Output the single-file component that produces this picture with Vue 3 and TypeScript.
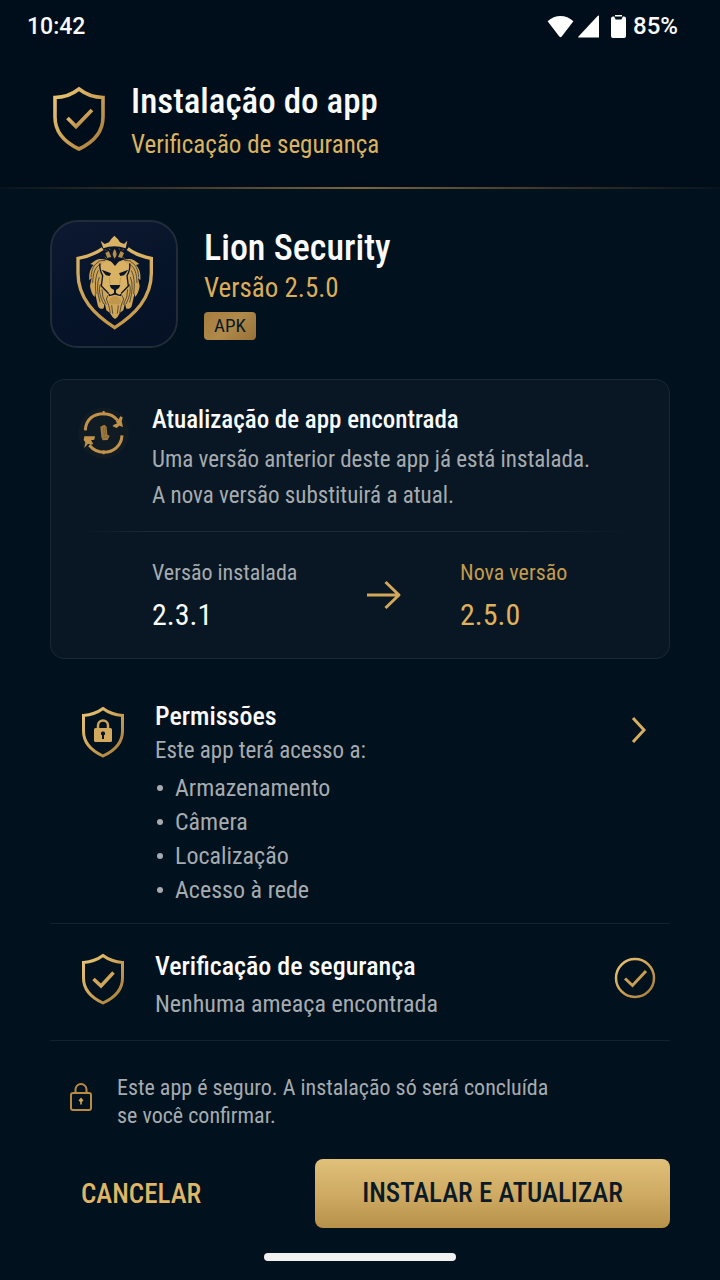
<script setup lang="ts">
interface AppRelease {
  name: string
  installed: string
  next: string
  format: string
}

const release: AppRelease = {
  name: 'Lion Security',
  installed: '2.3.1',
  next: '2.5.0',
  format: 'APK',
}

const permissions: string[] = ['Armazenamento', 'Câmera', 'Localização', 'Acesso à rede']
</script>

<template>
  <div class="screen">
    <svg class="defs" width="0" height="0" aria-hidden="true">
      <defs>
        <linearGradient id="gold" x1="0" y1="0" x2="1" y2="1">
          <stop offset="0" stop-color="#e9c675" />
          <stop offset="0.5" stop-color="#cfa356" />
          <stop offset="1" stop-color="#a27a38" />
        </linearGradient>
        <linearGradient id="goldSoft" x1="0" y1="0" x2="0" y2="1">
          <stop offset="0" stop-color="#dcb565" />
          <stop offset="1" stop-color="#c3974b" />
        </linearGradient>
      </defs>
    </svg>

    <div class="status">
      <span class="clock">10:42</span>
      <div class="indicators">
        <svg class="wifi" viewBox="0 0 27 23" aria-hidden="true">
          <path d="M.6 6.2C8-.9 19-.9 26.4 6.2L14.700 21.400Q13.500 22.900 12.300 21.400Z" fill="#fff" />
        </svg>
        <svg class="signal" viewBox="0 0 22 23" aria-hidden="true">
          <path d="M21 .8V22.500H.6Q-.3 22.500.5 21.500L19.600 1Q20.600 0 21 .8Z" fill="#fff" />
        </svg>
        <svg class="battery" viewBox="0 0 15 23" aria-hidden="true">
          <path d="M4 0h7v1.500H4z" fill="#fff" />
          <path d="M2 1.600h1.200L4.600 4.600h5.800l1.400-3H13q2 0 2 2V21q0 2-2 2H2q-2 0-2-2V3.600q0-2 2-2Z" fill="#fff" />
        </svg>
        <span>85%</span>
      </div>
    </div>

    <header class="header">
      <svg class="header-shield" viewBox="0 0 54 66" aria-hidden="true">
        <path d="M27 3C20 8.500 11 11.500 3 11.500V31C3 46 13 56.500 27 63C41 56.500 51 46 51 31V11.500C43 11.500 34 8.500 27 3Z" fill="none" stroke="url(#gold)" stroke-width="3.600" />
        <path d="M15.500 32L24 40.500L40 24" fill="none" stroke="url(#gold)" stroke-width="3.800" />
      </svg>
      <div>
        <h1 class="title">Instalação do app</h1>
        <p class="subtitle">Verificação de segurança</p>
      </div>
    </header>

    <main class="content">
      <section class="app">
        <svg class="app-icon" viewBox="-24 -24 372 372" role="img" aria-label="Lion Security">
          <g fill="none" stroke="url(#goldSoft)" stroke-width="10">
            <path d="M128 56Q98 77 54 85V130C54 205 104 254 164 293C224 254 274 205 274 130V85Q230 77 203 56" />
          </g>
          <path d="M122 32L134 42L147 37L153 28L163 17L174 28L180 37L192 42L202 32L197 55Q163 43 130 55Z" fill="#d9b263" />
          <g fill="#b38c48">
            <path d="M164 57Q176 72 164 86Q152 72 164 57Z" />
            <path d="M146 63L154 81L142 84L136 69Z" />
            <path d="M182 63L174 81L186 84L192 69Z" />
          </g>
          <path d="M135 58l4 5M147 55l3 5M177 55l3 5M191 57l-4 5M134 81l7 5M187 81l7 5" stroke="#6c5632" stroke-width="3" />
          <g fill="#cfa557">
            <path d="M150 94C139 88 119 84 107 91L91 102L101 105C91 115 86 129 88 151L95 143L90 168C92 182 96 194 104 201L105 189L114 229C119 237 125 238 131 235L134 219L139 241L149 248L158 262L165 267V100Z" />
            <path d="M180 94C191 88 211 84 222 91L238 102L228 105C238 115 243 129 241 151L234 143L239 168C237 182 233 194 225 201L224 189L215 229C210 237 204 238 198 235L195 219L190 241L180 248L172 262L165 267V100Z" />
          </g>
          <path d="M154 95L165 107L175 95L187 94C205 98 212 113 207 129L201 144L202 166L193 188L184 203L165 195L146 203L137 188L127 166L129 144L122 129C117 113 124 98 142 94Z" fill="#d9b264" />
          <g fill="none" stroke="#1a2029" stroke-width="2" stroke-linejoin="round">
            <path d="M117 95C101 104 95 117 93 142M120 103C105 112 99 128 98 159M115 121Q102 146 108 192M118 141Q106 169 120 217M121 162Q112 185 131 222M126 178Q125 201 139 224M116 93L136 91" />
            <path d="M212 95C228 104 234 117 236 142M209 103C224 112 230 128 231 159M214 121Q227 146 221 192M211 141Q223 169 209 217M208 162Q217 185 198 222M203 178Q204 201 190 224M213 93L193 91" />
            <path d="M145 195L139 207L146 225L151 249M185 195L191 207L184 225L179 249M155 226L158 251M175 226L172 251" />
          </g>
          <path d="M120 100C117 117 122 126 128 137L124 168L145 190M209 100C212 117 207 126 201 137L205 168L184 190" fill="none" stroke="#0a1527" stroke-width="4" />
          <g fill="#07142a">
            <path d="M125 119L153 130L149 138L138 136L132 129Z" />
            <path d="M205 119L177 130L181 138L192 136L198 129Z" />
            <path d="M149 165H181L177 174L168 180V189L178 194L187 188L182 199L165 194L148 199L143 188L152 194L162 189V180L153 174Z" />
            <path d="M153 94L165 108L177 94Q164 87 153 94Z" />
          </g>
          <path d="M148 142L151 163M182 142L179 163" fill="none" stroke="#c39a50" stroke-width="3" />
          <path d="M150 206Q165 192 180 206L184 216L177 223H153L146 216Z" fill="#c0964d" />
        </svg>
        <div>
          <h2 class="app-name">{{ release.name }}</h2>
          <p class="app-version">Versão {{ release.next }}</p>
          <span class="badge">{{ release.format }}</span>
        </div>
      </section>

      <section class="card">
        <div class="card-top">
          <svg class="update" viewBox="0 0 210 195" aria-hidden="true">
            <circle cx="101" cy="99" r="76" fill="#101b24" />
            <g fill="none" stroke="#c3924a" stroke-width="9">
              <path d="M46 91C47 57 72 41 101 41C119 41 133 48 143 61" />
              <path d="M156 106C154 138 130 157 101 157C83 157 69 149 58 136" />
            </g>
            <g fill="#c3924a">
              <path d="M137 65L145 59L151 49L158 52L155 64L159 81L148 77L140 84L128 79L130 75L142 70Z" />
              <path d="M43 109H75L73 119L63 121L70 132L63 134L54 131L43 144L46 127L41 120Z" />
              <path d="M98 33h6v13h-6zM98 151h6v12h-6z" />
              <path d="M91 80L103 74L110 80L112 104L119 107L113 120L98 121L94 112Z" fill="#9f7a3f" />
            </g>
            <path d="M100 82L103 108M106 80L107 103M98 113L113 111" stroke="#725b35" stroke-width="2" />
          </svg>
          <div>
            <h3 class="heading">Atualização de app encontrada</h3>
            <p class="text roomy">Uma versão anterior deste app já está instalada.<br />A nova versão substituirá a atual.</p>
          </div>
        </div>
        <div class="card-line"></div>
        <div class="versions">
          <div class="version">
            <span class="label">Versão instalada</span>
            <span class="number">{{ release.installed }}</span>
          </div>
          <svg class="arrow" viewBox="0 0 36 30" aria-hidden="true">
            <path d="M0 15H32M18.500 2L32 15L18.500 28" fill="none" stroke="#d3a85b" stroke-width="3" stroke-linejoin="round" />
          </svg>
          <div class="version new">
            <span class="label">Nova versão</span>
            <span class="number">{{ release.next }}</span>
          </div>
        </div>
      </section>

      <section class="row permissions">
        <svg class="row-shield" viewBox="0 0 44 52" aria-hidden="true">
          <path d="M22 2.500C16 7 9 9 2.500 9.500V25C2.500 37 11 45 22 50C33 45 41.500 37 41.500 25V9.500C35 9 28 7 22 2.500Z" fill="none" stroke="url(#gold)" stroke-width="3" />
          <path d="M17 23V19.500a5 5 0 0 1 10 0V23" fill="none" stroke="#cda357" stroke-width="2.500" />
          <rect x="13" y="22" width="18" height="14" rx="1.500" fill="#d3aa5d" />
          <path d="M22 25.500a2 2 0 0 1 1 3.800V33h-2v-3.700a2 2 0 0 1 1-3.800Z" fill="#06121e" />
        </svg>
        <div class="row-body">
          <h3 class="heading">Permissões</h3>
          <p class="text intro">Este app terá acesso a:</p>
          <ul class="list">
            <li v-for="item in permissions" :key="item">{{ item }}</li>
          </ul>
        </div>
        <button class="chevron" type="button" aria-label="Ver permissões">
          <svg viewBox="0 0 18 28" aria-hidden="true">
            <path d="M3 2L14 14L3 26" fill="none" stroke="#d7ad60" stroke-width="3" />
          </svg>
        </button>
      </section>

      <section class="row verification">
        <svg class="row-shield" viewBox="0 0 44 52" aria-hidden="true">
          <path d="M22 2.500C16 7 9 9 2.500 9.500V25C2.500 37 11 45 22 50C33 45 41.500 37 41.500 25V9.500C35 9 28 7 22 2.500Z" fill="none" stroke="url(#gold)" stroke-width="3" />
          <path d="M12.500 26L20 33L32.500 19.500" fill="none" stroke="#d1a65a" stroke-width="3.500" />
        </svg>
        <div class="row-body">
          <h3 class="heading">Verificação de segurança</h3>
          <p class="text result">Nenhuma ameaça encontrada</p>
        </div>
        <svg class="ok" viewBox="0 0 42 42" aria-hidden="true">
          <circle cx="21" cy="21" r="19" fill="none" stroke="url(#gold)" stroke-width="2.500" />
          <path d="M11 21.500L18.500 28.500L32 14" fill="none" stroke="#c99e53" stroke-width="3" />
        </svg>
      </section>

      <div class="notice">
        <svg class="lock" viewBox="0 0 24 30" aria-hidden="true">
          <rect x="2" y="11" width="20" height="17" rx="2" fill="none" stroke="#b98b42" stroke-width="2" />
          <path d="M6.500 11V7.500a5.500 5.500 0 0 1 11 0V11" fill="none" stroke="#b98b42" stroke-width="2" />
          <path d="M12 15.500L14.500 18.500L12.800 20V22.500H11.200V20L9.500 18.500Z" fill="#d3a253" />
        </svg>
        <p>Este app é seguro. A instalação só será concluída<br />se você confirmar.</p>
      </div>

      <div class="actions">
        <button class="cancel" type="button">CANCELAR</button>
        <button class="install" type="button">INSTALAR E ATUALIZAR</button>
      </div>
    </main>
    <div class="home-bar"></div>
  </div>
</template>

<style>
body {
  margin: 0;
  background: #01111d;
}
</style>

<style scoped>
.screen {
  min-height: 100vh;
  box-sizing: border-box;
  display: flex;
  flex-direction: column;
  background: #01111d;
  color: #fafafa;
  font-family: "Roboto Condensed", Roboto, "Liberation Sans", sans-serif;
}
.defs {
  position: absolute;
}
h1,
h2,
h3,
p,
ul {
  margin: 0;
  padding: 0;
}
button {
  padding: 0;
  border: 0;
  background: none;
  font: inherit;
  cursor: pointer;
}
.status {
  height: 52px;
  padding: 0 42px 0 27px;
  display: flex;
  align-items: center;
  justify-content: space-between;
  background: #000e1b;
  font-family: Roboto, "Liberation Sans", sans-serif;
  font-size: 24px;
  font-weight: 500;
}
.clock {
  font-size: 23px;
}
.indicators {
  display: flex;
  align-items: center;
  gap: 4px;
}
.wifi {
  width: 27px;
  height: 23px;
}
.signal {
  width: 22px;
  height: 23px;
}
.battery {
  width: 15px;
  height: 23px;
  margin: 0 3px 0 7px;
}
.header {
  display: flex;
  align-items: flex-start;
  gap: 25px;
  padding: 28px 50px 21px 52px;
  background: #000e1b;
  border-bottom: 2px solid;
  border-image: linear-gradient(90deg, #07131c, #40382a 25%, #7d653f 50%, #40382a 75%, #07131c) 1;
}
.header-shield {
  width: 54px;
  height: 66px;
  margin-top: 6px;
}
.title {
  font-size: 35px;
  line-height: 44px;
  font-weight: 500;
}
.subtitle {
  font-size: 25px;
  line-height: 42px;
  color: #dbb360;
}
.content {
  padding: 31px 50px 0;
}
.app {
  display: flex;
  gap: 26px;
}
.app-icon {
  box-sizing: border-box;
  width: 128px;
  height: 128px;
  border: 2px solid #212b3a;
  border-radius: 28px;
  background: linear-gradient(160deg, #0d1930, #06142a 50%, #051124);
}
.app-name {
  margin-top: 6px;
  font-size: 36px;
  line-height: 44px;
  font-weight: 500;
}
.app-version {
  font-size: 27px;
  line-height: 36px;
  color: #dbad5a;
}
.badge {
  display: block;
  width: 52px;
  margin-top: 6px;
  border-radius: 4px;
  background: linear-gradient(135deg, #a47d40, #b08a4a 50%, #967038);
  color: #0a1824;
  text-align: center;
  font-size: 19px;
  line-height: 28px;
}
.card {
  margin-top: 31px;
  padding: 22px 30px 19px;
  border: 1px solid #1a2832;
  border-radius: 14px;
  background: #081723;
}
.card-top {
  display: flex;
  gap: 10px;
}
.update {
  width: 70px;
  height: 65px;
  margin: -2px 2px 0 -11px;
}
.heading {
  font-size: 25px;
  line-height: 36px;
  font-weight: 500;
}
.text {
  font-size: 23px;
  color: #a6abb0;
}
.roomy {
  line-height: 36px;
  margin-top: 4px;
}
.card-line {
  height: 1px;
  margin: 17px 8px 23px 0;
  background: linear-gradient(90deg, #081723, #1c2933 12%, #1c2933 80%, #081723);
}
.versions {
  display: grid;
  grid-template-columns: 215px 93px 1fr;
  align-items: center;
  padding-left: 71px;
}
.arrow {
  width: 36px;
  height: 30px;
  margin-bottom: 4px;
}
.version {
  display: flex;
  flex-direction: column;
}
.label {
  font-size: 22px;
  line-height: 36px;
  color: #a6abb0;
}
.number {
  font-size: 30px;
  line-height: 48px;
}
.new .label {
  color: #c49a4d;
}
.new .number {
  color: #dfb15c;
}
.row {
  display: flex;
  align-items: flex-start;
  border-bottom: 1px solid #14232d;
}
.row-shield {
  width: 44px;
  height: 52px;
  margin: 8px 30px 0 31px;
}
.row-body {
  flex: 1;
}
.permissions {
  padding: 39px 0 16px;
}
.intro {
  line-height: 34px;
}
.list {
  margin-top: 3px;
  list-style: none;
  color: #a6abb0;
  font-size: 24px;
  line-height: 34px;
}
.list li {
  display: flex;
  align-items: center;
  gap: 12px;
}
.list li::before {
  content: "";
  width: 6px;
  height: 6px;
  margin-left: 2px;
  border-radius: 50%;
  background: #a6abb0;
}
.chevron {
  display: flex;
  margin: 18px 22px 0 0;
}
.chevron svg {
  width: 18px;
  height: 28px;
}
.row .heading {
  font-size: 26px;
}
.verification {
  padding: 22px 0 18px;
}
.verification .heading {
  line-height: 40px;
}
.verification .row-shield {
  margin-top: 7px;
}
.result {
  font-size: 24px;
  line-height: 36px;
}
.ok {
  width: 42px;
  height: 42px;
  margin: 11px 14px 0 0;
}
.notice {
  display: flex;
  gap: 24px;
  padding: 33px 0 0 19px;
  color: #a6abb0;
  font-size: 22px;
  line-height: 28px;
}
.lock {
  width: 24px;
  height: 30px;
  margin-top: 8px;
}
.actions {
  display: flex;
  justify-content: space-between;
  margin-top: 29px;
}
.cancel {
  padding: 0 31px;
  color: #dfb566;
  font-size: 27px;
  font-weight: 500;
}
.install {
  width: 355px;
  border-radius: 8px;
  background: linear-gradient(180deg, #e0c07a, #cfab63 50%, #b7914a);
  color: #0b1a27;
  font-size: 27px;
  line-height: 69px;
  font-weight: 500;
}
.home-bar {
  width: 192px;
  height: 8px;
  margin: 25px auto 18px;
  border-radius: 4px;
  background: #f1f1f2;
}
</style>
